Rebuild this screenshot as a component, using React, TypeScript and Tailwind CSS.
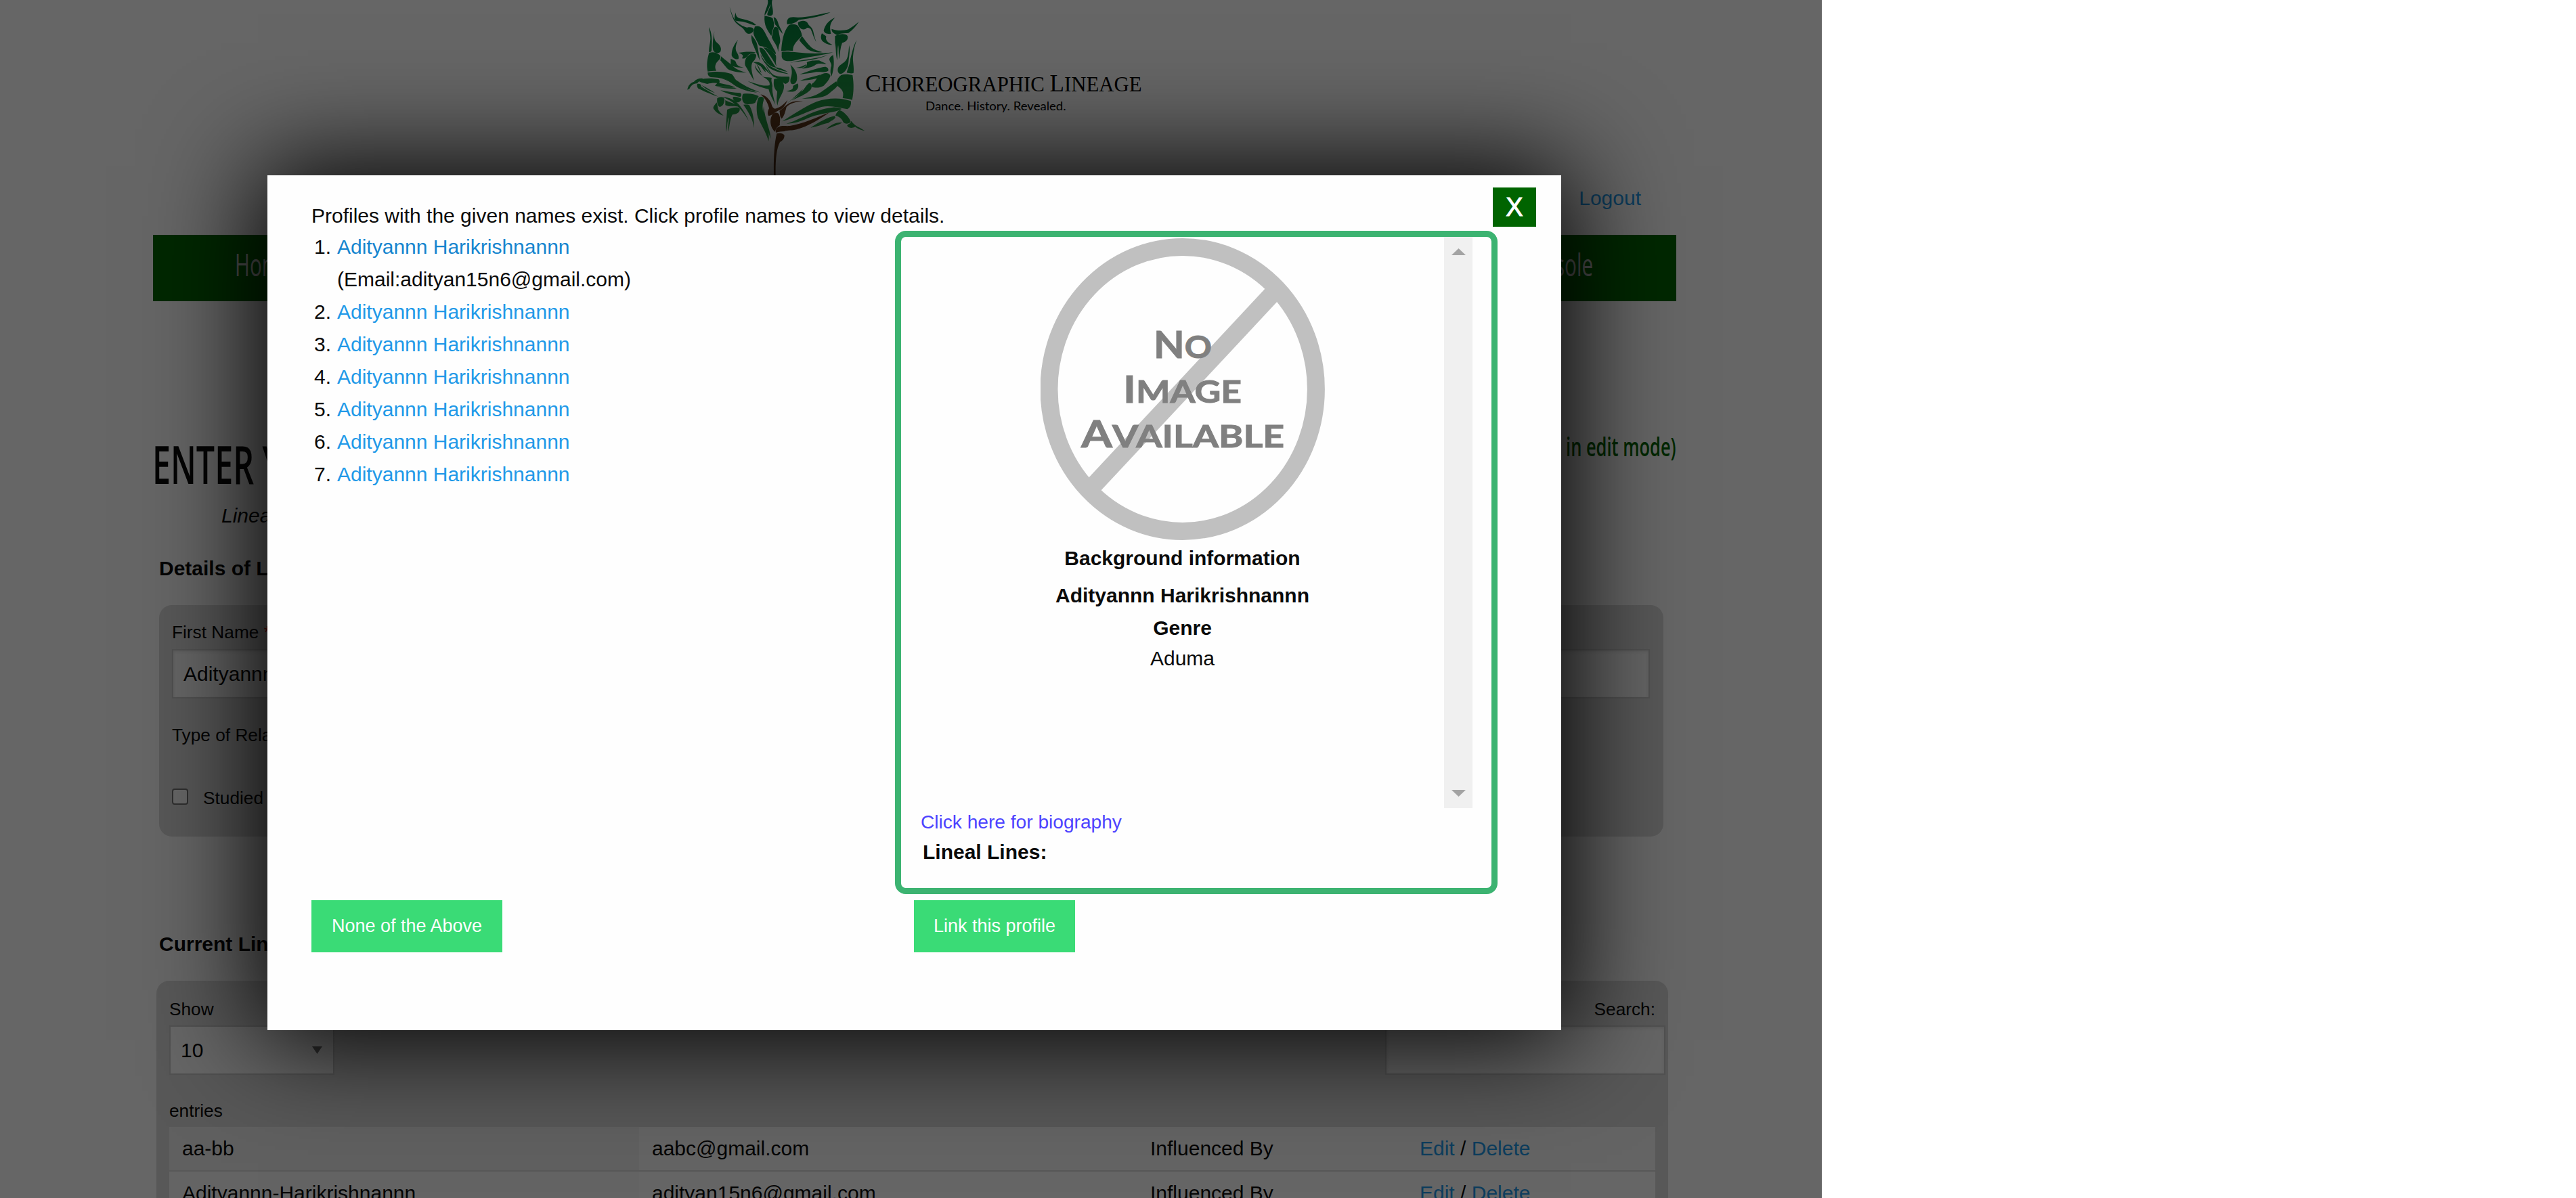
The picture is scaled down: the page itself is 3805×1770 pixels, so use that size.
import React from "react";

const leaves = [
  "M372 0C378 20 358 45 358 68C366 62 376 40 384 18C386 30 370 50 370 66C380 74 394 70 395 60C398 40 386 20 392 0Z",
  "M358 70C372 74 385 74 394 80C400 100 402 112 398 122C392 135 392 145 388 160C372 135 354 115 358 70Z",
  "M398 76C408 78 416 90 420 108C426 124 436 136 438 150C426 138 416 122 408 112C400 104 402 90 398 76Z",
  "M400 122C410 115 420 122 420 135C424 160 430 175 426 190C420 205 420 215 418 230C416 200 396 185 390 165C394 150 394 135 400 122Z",
  "M203 30C212 60 220 78 226 88C240 105 262 118 280 122C300 118 310 124 310 132C305 150 290 152 280 148C270 140 268 130 258 122C240 112 226 98 220 85C212 66 206 48 203 30Z",
  "M230 55C230 70 236 78 250 82C275 88 300 92 320 110C312 116 296 104 270 98C250 92 226 98 225 84C224 74 228 64 230 55Z",
  "M315 118C335 110 350 125 360 145C372 170 385 190 398 215C408 230 410 238 406 240C390 225 375 212 345 205C335 206 332 200 328 190C318 170 304 150 310 135Z",
  "M300 155C312 170 322 180 326 200C330 225 334 245 338 270C328 250 318 225 310 205C302 190 298 172 300 155Z",
  "M335 212C350 208 358 220 368 236C382 258 392 275 408 298C392 298 378 290 365 275C350 250 338 235 335 212Z",
  "M352 210C375 212 400 228 408 246C412 262 404 275 412 296C400 275 385 245 352 210Z",
  "M340 240C350 262 365 280 385 295C410 310 440 318 465 328C440 325 400 318 378 300C358 280 345 262 340 240Z",
  "M400 298C420 298 440 306 460 318C440 316 420 310 400 298Z",
  "M458 108C454 85 465 76 485 76C540 82 600 62 650 54C620 70 560 82 510 88C495 100 488 106 458 108Z",
  "M466 111C480 105 500 107 506 115C516 130 522 145 524 158C505 180 482 195 484 226C465 222 448 226 432 226C434 190 440 140 466 111Z",
  "M506 100C520 88 545 90 550 104C556 116 570 120 574 140C578 160 582 170 587 186C576 168 568 140 562 128C550 120 546 122 540 128C525 136 506 124 506 100Z",
  "M524 160C535 175 545 190 560 205C575 222 600 226 615 232C590 234 560 228 545 215C530 200 520 190 512 178Z",
  "M434 230C480 224 540 246 662 232C620 244 570 250 520 260C480 272 440 280 434 252Z",
  "M470 278C530 262 590 262 640 242C600 264 540 268 470 278Z",
  "M670 78C640 92 626 112 620 135C622 148 638 152 652 150C650 135 646 122 650 110C654 95 662 88 670 78Z",
  "M612 148C604 165 608 182 625 190C635 196 645 200 658 198C640 190 630 180 630 168C636 160 622 155 612 148Z",
  "M655 128C680 138 710 136 730 130C745 120 760 110 776 96C764 116 748 134 730 146C712 148 690 146 680 156C668 148 655 145 655 128Z",
  "M670 160C690 148 720 148 726 160C730 176 718 186 702 190C694 210 692 235 690 262C684 240 688 215 684 200C680 220 682 245 680 268C672 240 676 215 670 190Z",
  "M733 200C738 225 732 250 730 275C728 300 715 322 695 328C682 326 680 310 684 300C692 284 714 280 722 262C730 245 730 225 733 200Z",
  "M766 178C750 205 746 235 738 262C736 285 728 300 722 322C735 326 745 326 752 324C756 300 748 275 750 250C752 225 758 200 766 178Z",
  "M698 332C715 327 735 330 748 333C754 370 754 410 746 443C730 436 710 436 704 434C712 405 700 395 680 380C676 360 680 345 698 332Z",
  "M676 360C660 372 640 385 620 400C590 425 560 430 524 438C570 436 610 438 640 418C660 400 676 390 682 378Z",
  "M740 448C744 460 738 478 725 484C690 478 650 466 610 474C560 488 500 520 436 538C480 510 540 470 590 450C640 432 700 432 740 448Z",
  "M660 476C675 474 690 478 700 483C670 500 610 500 560 520C520 538 490 548 454 548C510 535 570 485 660 476Z",
  "M690 488C705 490 735 520 740 540C730 552 712 550 706 540C700 525 690 518 672 512C676 500 682 492 690 488Z",
  "M668 514C640 520 600 540 562 566C590 562 620 548 640 545C655 535 668 530 672 520Z",
  "M702 544C675 540 650 555 630 574C655 562 690 552 702 544Z",
  "M742 536C752 550 765 560 780 566L802 580C788 578 772 572 760 562C745 570 726 568 724 556C728 548 740 550 742 536Z",
  "M112 120C124 145 126 175 124 205C122 220 128 230 112 232C110 210 118 190 118 170C118 150 112 138 112 120Z",
  "M136 138C132 165 136 180 148 190C160 200 170 215 162 230C150 238 136 236 130 222C126 200 130 165 136 138Z",
  "M112 235C130 228 150 234 162 247C166 262 150 270 144 280C136 295 140 305 144 314C130 314 118 314 106 317C100 290 104 260 112 235Z",
  "M166 250C185 268 205 280 215 292C235 310 260 318 278 322C250 322 215 318 195 306C180 290 170 275 162 268Z",
  "M106 321C140 315 185 317 212 328C226 340 222 350 240 360C275 385 310 398 340 410C300 400 260 392 230 375C200 355 180 345 120 342C108 338 106 330 106 321Z",
  "M170 348C200 350 225 368 250 382C275 395 300 402 325 410C290 408 250 396 225 378C205 362 188 355 170 348Z",
  "M16 398C18 378 32 366 45 362C55 350 70 346 85 348C75 358 62 362 60 370C48 368 36 375 28 388C26 394 22 396 16 398Z",
  "M70 354C95 344 130 346 155 352C160 358 160 364 156 370C140 366 120 368 105 372C95 370 72 366 66 358Z",
  "M60 372C70 370 78 374 78 384C95 396 120 410 152 428C120 418 85 402 64 392C58 386 58 378 60 372Z",
  "M80 378C100 388 118 398 138 412C115 404 92 392 80 378Z",
  "M150 366C175 372 205 376 230 388C205 384 160 386 138 380Z",
  "M148 384C180 388 210 384 235 392C205 394 170 392 148 384Z",
  "M240 176C225 195 212 215 212 245C216 258 230 264 242 262C246 250 240 240 234 230C226 215 232 195 240 176Z",
  "M208 260C220 266 232 268 232 280C240 296 255 298 266 298C245 302 222 298 208 288Z",
  "M242 234C270 228 300 228 320 232C310 236 300 236 288 242C278 254 268 264 258 258C268 244 258 240 242 234Z",
  "M290 244C305 232 326 236 320 252C316 268 306 272 302 282C296 300 304 330 312 358C295 330 285 310 272 290C268 270 276 252 290 244Z",
  "M308 276C330 270 350 282 360 296C370 310 380 320 384 330C370 318 352 296 308 276Z",
  "M322 284C332 300 335 318 345 322C335 302 332 290 322 284Z",
  "M338 288C348 304 356 316 364 320C356 300 350 292 338 288Z",
  "M316 284C314 300 340 320 350 338C330 322 312 306 316 284Z",
  "M362 285C372 300 382 318 392 328C410 342 440 340 468 340C470 352 468 368 450 372C430 360 420 345 400 342C384 330 372 310 362 285Z",
  "M400 350C420 342 442 356 444 380C446 410 420 430 415 468C408 440 414 425 414 405C400 392 396 378 400 350Z",
  "M390 345C384 360 396 375 392 388C392 415 400 440 406 464C392 436 380 415 376 395C340 388 310 375 284 360C320 370 350 385 380 378C384 366 374 352 348 340C366 344 380 342 390 345Z",
  "M472 286C492 305 504 325 502 350C500 366 490 376 478 372C470 366 472 352 476 340C482 320 478 302 472 286Z",
  "M505 370C512 385 504 400 490 405C478 408 464 406 454 404C470 400 484 398 484 386C482 378 495 376 505 370Z",
  "M545 276C560 268 580 268 600 268C615 276 625 278 632 284C615 284 600 278 586 286C570 298 545 304 522 304C540 296 550 290 545 276Z",
  "M498 300C515 298 530 292 545 284C535 300 520 304 498 300Z",
  "M662 244C666 270 668 300 655 338C648 325 650 310 652 298C660 285 645 275 645 262C650 250 655 248 662 244Z",
  "M615 298C630 292 644 300 640 314C620 324 600 316 580 320C560 324 535 326 512 330C545 318 580 306 615 298Z",
  "M616 327C630 321 648 325 650 337C644 355 632 368 620 380C600 392 578 388 569 386C564 380 566 370 576 366C587 355 592 337 616 327Z",
  "M606 331C580 340 545 345 515 358C550 356 578 352 594 346Z",
  "M555 368C570 366 570 390 560 400C540 420 510 430 480 445C500 430 515 412 530 398C540 385 545 375 555 368Z",
  "M528 395C505 415 480 440 458 458C484 440 500 425 518 412Z",
  "M162 400C190 404 220 412 250 412C258 416 256 428 250 430C225 424 190 416 162 400Z",
  "M218 430C230 426 248 432 256 438C254 450 240 458 228 452C222 446 216 438 218 430Z",
  "M262 416C290 412 315 418 332 426C324 440 320 448 316 456C305 462 280 464 270 459C258 450 256 432 262 416Z",
  "M264 464C275 464 285 462 290 466C298 480 312 510 312 568C306 530 290 500 264 464Z",
  "M332 432C345 426 358 430 354 445C345 470 350 500 362 530C372 560 380 590 376 626C362 580 340 550 328 520C320 490 322 450 332 432Z",
  "M354 470C356 500 366 530 374 560C380 580 386 600 384 616C376 580 350 540 350 510Z",
  "M148 436C160 426 180 428 180 442C180 456 175 470 160 474C150 472 146 455 148 436Z",
  "M146 454C138 464 128 474 132 482C144 500 160 508 176 512C162 500 152 490 152 480Z",
  "M184 444C200 452 220 460 242 464C246 470 244 472 236 472C215 470 200 474 184 466Z",
  "M192 486C210 476 245 472 248 482C250 498 235 506 216 508C206 525 204 550 198 584C194 560 200 540 200 520C190 545 194 565 188 586C186 555 190 520 192 486Z",
  "M172 430C200 430 230 445 250 470C268 495 280 515 288 536C270 505 250 480 225 460C205 445 190 438 172 430Z",
];

const branches = [
  "M340 418C365 424 380 440 388 460C392 475 396 480 404 482C425 478 440 465 460 444C450 468 438 484 420 490C405 496 392 512 376 514C368 500 374 490 378 480C372 455 360 435 340 418Z",
  "M528 448C500 450 470 458 455 475C450 495 445 515 434 526C424 518 428 505 424 492C440 480 448 468 470 456C490 448 510 446 528 448Z",
  "M395 504C408 496 420 498 424 512C430 530 424 545 426 554C415 560 408 570 404 584C388 570 374 535 395 504Z",
  "M414 566C430 554 450 560 470 558C530 548 590 520 646 498C600 530 550 560 500 574C480 580 460 576 446 582C435 584 420 582 408 588C406 578 408 572 414 566Z",
  "M412 592C425 588 440 590 446 600C446 618 435 624 426 630C410 660 406 710 407 780L399 780C398 710 400 640 412 592Z",
];

function Logo() {
  return (
    <svg className="ml-[1010px] block h-[260px] w-[690px]" viewBox="0 0 2070 780">
      <defs>
        <linearGradient id="leaf" gradientUnits="userSpaceOnUse" x1="0" y1="0" x2="0" y2="600">
          <stop offset="0" stopColor="#00783c" />
          <stop offset="1" stopColor="#2ca648" />
        </linearGradient>
      </defs>
      <g fill="url(#leaf)">
        {leaves.map((d, i) => (
          <path key={i} d={d} />
        ))}
      </g>
      <g fill="#643c1e">
        {branches.map((d, i) => (
          <path key={i} d={d} />
        ))}
      </g>
      <text x="804" y="404" textLength="1226" lengthAdjust="spacingAndGlyphs" fontFamily="Liberation Serif, serif" fontSize="92">
        <tspan fontSize="105">C</tspan>HOREOGRAPHIC <tspan fontSize="105">L</tspan>INEAGE
      </text>
      <text x="1071" y="490" textLength="623" lengthAdjust="spacingAndGlyphs" fontFamily="Lato, sans-serif" fontSize="49">
        Dance. History. Revealed.
      </text>
    </svg>
  );
}

function NoImage() {
  const t = { fontFamily: "Lato, sans-serif", fontWeight: 700, fontSize: 46, lengthAdjust: "spacingAndGlyphs" as const };
  return (
    <svg className="block h-[450px] w-[420px]" viewBox="1537 350.4 420 450">
      <ellipse cx="1746.7" cy="575.3" rx="197.2" ry="210" fill="none" stroke="#c0c0c0" strokeWidth="26" />
      <path d="M1877 418L1896 436L1617 735L1599 716Z" fill="#c0c0c0" />
      <g fill="#808080" stroke="#808080" strokeWidth="1">
        <text {...t} x="1704" y="529.5" textLength="86">
          <tspan fontSize="55">N</tspan>O
        </text>
        <text {...t} x="1659" y="595.3" textLength="175">
          <tspan fontSize="55">I</tspan>MAGE
        </text>
        <text {...t} x="1597" y="661" textLength="300">
          <tspan fontSize="55">A</tspan>VAILABLE
        </text>
      </g>
    </svg>
  );
}

const rows = [
  { name: "aa-bb", email: "aabc@gmail.com", first: "bg-[#f1f1f1]", rest: "bg-[#fafafa]" },
  { name: "Adityannn-Harikrishnannn", email: "adityan15n6@gmail.com", first: "bg-[#fafafa]", rest: "bg-[#fefefe]" },
];

const input = "h-[73px] border-2 border-[#cacaca] bg-[#fefefe] shadow-[inset_0_2px_4px_rgba(10,10,10,0.1)]";

function Page() {
  return (
    <div className="h-[1770px] w-[2691px]">
      <header className="h-[347px]">
        <Logo />
        <div className="flex justify-end pr-[267px]">
          <a className="mt-[9px] leading-[48px] text-[#2199e8]">Logout</a>
        </div>
      </header>
      <nav className="ml-[226px] flex h-[98px] w-[2250px] items-center justify-between bg-[#006400] pr-[123px] pb-[10px] pl-[121px] font-['Open_Sans'] text-[45px] text-[#ccc]">
        <span className="inline-block origin-left scale-x-[0.66]">Home</span>
        <span className="inline-block origin-right scale-x-[0.66]">Console</span>
      </nav>
      <div className="ml-[225px] flex h-[293px] w-[2251px] items-end justify-between font-['Open_Sans']">
        <h1 className="mb-[3px] origin-left scale-x-[0.62] text-[78px] leading-[100px] font-semibold whitespace-nowrap">ENTER YOUR LINEAGE</h1>
        <span className="mb-[49px] origin-right scale-x-[0.67] text-[38px] leading-[60px] font-semibold text-[#006400]">(You are in edit mode)</span>
      </div>
      <p className="ml-[327px] leading-[48px] italic">Lineage</p>
      <h2 className="mt-[30px] ml-[235px] leading-[48px] font-bold">Details of Lineage</h2>
      <section className="mt-[30px] ml-[235px] h-[342px] w-[2222px] rounded-[19px] bg-[#dcdcdc] pt-[16px] pl-[19px] text-[26.25px]">
        <label className="block leading-[49px]">
          First Name <span className="text-[#e00]">*</span>
        </label>
        <div className={`${input} flex w-[2183px] items-center pl-[15px] text-[30px]`}>Adityannn</div>
        <label className="mt-[30px] block leading-[48px]">Type of Relationship</label>
        <div className="mt-[45px] flex items-center gap-[22px]">
          <span className="mb-[4px] size-[24px] rounded-[4px] border-2 border-[#767676] bg-white" />
          <span className="leading-[48px]">Studied</span>
        </div>
      </section>
      <h2 className="mt-[135px] ml-[235px] leading-[48px] font-bold">Current Lineage</h2>
      <section className="mt-[30px] ml-[231px] h-[321px] w-[2233px] overflow-hidden rounded-t-[19px] bg-[#dcdcdc] pt-[18px] pl-[19px] text-[26.25px]">
        <div className="flex justify-between">
          <div>
            <label className="block leading-[48px]">Show</label>
            <div className={`${input} flex w-[244px] items-center justify-between pr-[16px] pl-[15px] text-[30px] shadow-none`}>
              10
              <svg className="h-[11px] w-[15px]" viewBox="0 0 15 11">
                <path d="M0 0H15L7.500 11Z" fill="#707070" />
              </svg>
            </div>
          </div>
          <div className="mr-[4px] w-[414px]">
            <label className="block pr-[15px] text-right leading-[48px]">Search:</label>
            <div className={input} />
          </div>
        </div>
        <p className="mt-[29px] h-[48px] leading-[48px]">entries</p>
        <div className="w-[2195px] text-[30px]">
          {rows.map((r) => (
            <div key={r.name} className={`flex h-[66px] border-b-2 border-[#ddd] leading-[64px] ${r.rest}`}>
              <span className={`w-[694px] pl-[19px] ${r.first}`}>{r.name}</span>
              <span className="w-[736px] pl-[19px]">{r.email}</span>
              <span className="w-[399px] pl-[19px]">Influenced By</span>
              <span className="pl-[18px]">
                <a className="text-[#2199e8]">Edit</a> / <a className="text-[#2199e8]">Delete</a>
              </span>
            </div>
          ))}
        </div>
      </section>
    </div>
  );
}

function Modal() {
  return (
    <div className="absolute top-[259px] left-[395px] h-[1263px] w-[1911px] bg-[#fefefe] pt-[36px] pl-[65px] shadow-[0_0_150px_14px_#000]">
      <button className="absolute top-[18px] right-[37px] flex h-[58px] w-[64px] items-center justify-center bg-[#006400] text-[38px] leading-none text-white [-webkit-text-stroke:1px_white]">X</button>
      <p className="h-[46px] leading-[48px]">Profiles with the given names exist. Click profile names to view details.</p>
      <div className="flex h-[980px]">
        <ol className="w-[862px] leading-[48px]">
          {[1, 2, 3, 4, 5, 6, 7].map((n) => (
            <li key={n} className="flex">
              <span className="w-[38px] pl-[4px]">{n}.</span>
              <span>
                <a className={n === 1 ? "text-[#1585cf]" : "text-[#2199e8]"}>Adityannn Harikrishnannn</a>
                {n === 1 && <span className="block">(Email:adityan15n6@gmail.com)</span>}
              </span>
            </li>
          ))}
        </ol>
        <div className="h-[980px] w-[890px] rounded-[16px] border-[9px] border-[#3cb371] pr-[28px] pl-[29px]">
          <div className="flex h-[844px]">
            <div className="flex flex-1 flex-col items-center leading-[48px]">
              <NoImage />
              <b className="mt-px">Background information</b>
              <b className="mt-[7px]">Adityannn Harikrishnannn</b>
              <b className="h-[45px]">Genre</b>
              <span>Aduma</span>
            </div>
            <div className="flex w-[42px] flex-col items-center justify-between bg-[#f0f0f0] pt-[17px] pb-[17px]">
              <svg className="h-[10px] w-[21px]" viewBox="0 0 21 10">
                <path d="M0 10H21L10.500 0Z" fill="#a3a3a3" />
              </svg>
              <svg className="h-[10px] w-[21px]" viewBox="0 0 21 10">
                <path d="M0 0H21L10.500 10Z" fill="#a3a3a3" />
              </svg>
            </div>
          </div>
          <a className="block text-[28.125px] leading-[41px] text-[#4d43ff]">Click here for biography</a>
          <b className="block pl-[3px] leading-[48px]">Lineal Lines:</b>
        </div>
      </div>
      <div className="mt-[9px] flex text-[27px] text-[#fefefe]">
        <button className="h-[77px] w-[282px] bg-[#3adb76]">None of the Above</button>
        <button className="ml-[608px] h-[77px] w-[238px] bg-[#3adb76]">Link this profile</button>
      </div>
    </div>
  );
}

export default function App() {
  return (
    <div className="relative h-[1770px] w-full overflow-hidden bg-white font-['Liberation_Sans',Arial,sans-serif] text-[30px] text-[#0a0a0a]">
      <Page />
      <div className="absolute inset-y-0 left-0 w-[2691px] bg-black/60" />
      <Modal />
    </div>
  );
}
